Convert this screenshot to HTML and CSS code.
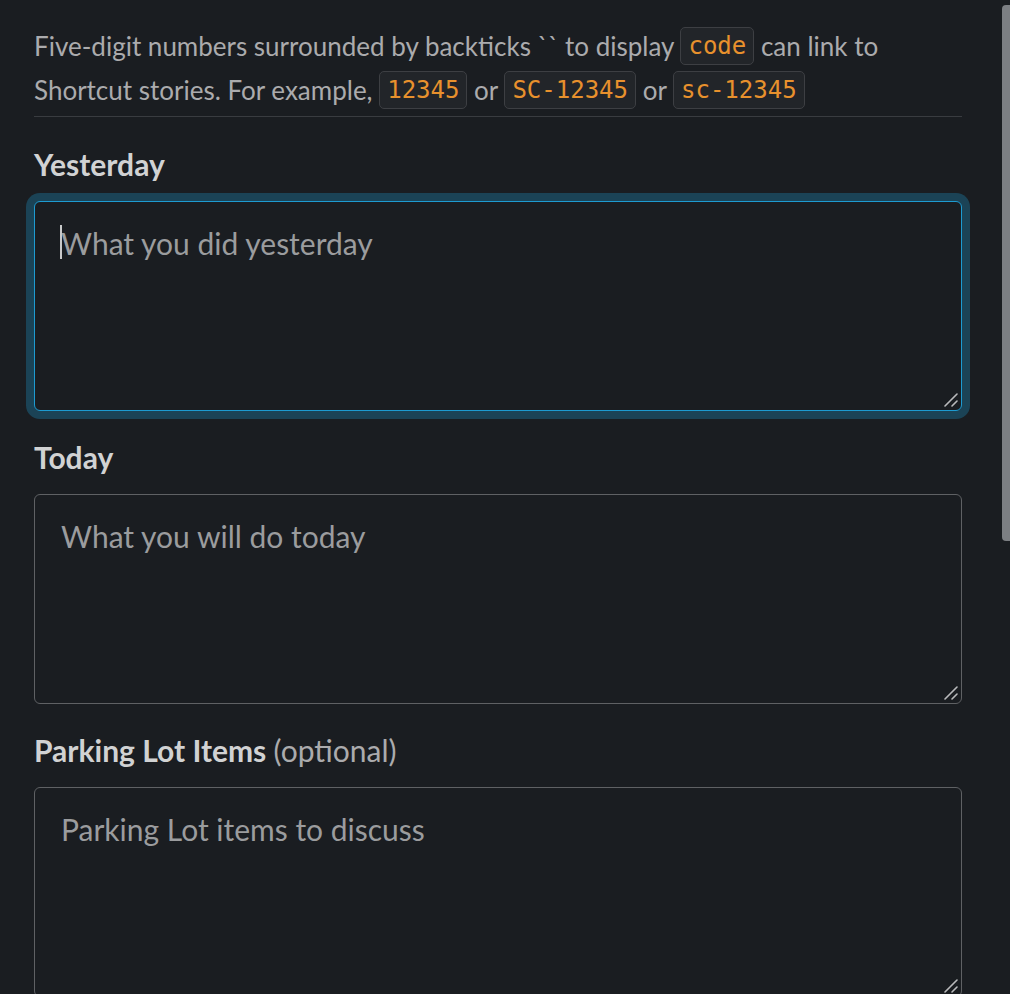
FILE: index.html
```html
<!DOCTYPE html>
<html lang="en">
<head>
<meta charset="utf-8">
<title>Standup</title>
<link rel="stylesheet" href="styles.css">
</head>
<body>
<main class="form">
  <p class="intro">Five-digit numbers surrounded by backticks `` to display <code class="tag">code</code> can link to Shortcut stories. For example, <code class="tag">12345</code> or <code class="tag">SC-12345</code> or <code class="tag">sc-12345</code></p>

  <div class="field">
    <label class="label" for="y">Yesterday</label>
    <div class="box-wrap">
      <textarea id="y" class="box focused" placeholder="What you did yesterday"></textarea>
      <span class="caret"></span>
      <svg class="grip" viewBox="0 0 14 14" width="14" height="14"><path d="M1 13 L13 1 M8 13 L13 8" stroke="#b9babc" stroke-width="1.6" stroke-linecap="round" fill="none"/></svg>
    </div>
  </div>

  <div class="field">
    <label class="label" for="t">Today</label>
    <div class="box-wrap">
      <textarea id="t" class="box" placeholder="What you will do today"></textarea>
      <svg class="grip" viewBox="0 0 14 14" width="14" height="14"><path d="M1 13 L13 1 M8 13 L13 8" stroke="#b9babc" stroke-width="1.6" stroke-linecap="round" fill="none"/></svg>
    </div>
  </div>

  <div class="field">
    <label class="label" for="p">Parking Lot Items <span class="opt">(optional)</span></label>
    <div class="box-wrap">
      <textarea id="p" class="box" placeholder="Parking Lot items to discuss"></textarea>
      <svg class="grip" viewBox="0 0 14 14" width="14" height="14"><path d="M1 13 L13 1 M8 13 L13 8" stroke="#b9babc" stroke-width="1.6" stroke-linecap="round" fill="none"/></svg>
    </div>
  </div>
</main>
<div class="scrollbar"></div>
</body>
</html>
```

FILE: styles.css
```css
html, body {
  margin: 0;
  padding: 0;
  background: #1a1d21;
  color-scheme: dark;
  overflow: hidden;
}

body {
  font-family: Lato, "Noto Sans", sans-serif;
  height: 994px;
}

.form {
  width: 928px;
  padding: 24px 0 0 34px;
}

.intro {
  margin: 0;
  font-size: 26px;
  line-height: 44px;
  color: #ababad;
  padding-bottom: 4px;
  border-bottom: 1px solid #393c40;
}

.tag {
  display: inline-block;
  font-family: "DejaVu Sans Mono", "Liberation Mono", monospace;
  font-size: 24px;
  line-height: 28px;
  padding: 4px 7px;
  border: 1px solid #3d3f43;
  border-radius: 5px;
  background: #222529;
  color: #e8912d;
  vertical-align: 2px;
}

.field {
  display: flex;
  flex-direction: column;
  margin-top: 30px;
}

.field + .field {
  margin-top: 29px;
}

.label {
  font-size: 30px;
  line-height: 34px;
  font-weight: 700;
  color: #d1d2d3;
  margin-bottom: 20px;
}

.opt {
  font-weight: 400;
  color: #ababad;
}

.box-wrap {
  position: relative;
  display: flex;
}

.box {
  flex: 1;
  box-sizing: border-box;
  height: 210px;
  margin: 0;
  padding: 20px 26px;
  background: #1a1d21;
  border: 1px solid #5f6164;
  border-radius: 6px;
  font-family: Lato, "Noto Sans", sans-serif;
  font-size: 30px;
  line-height: 42px;
  color: #d1d2d3;
  resize: none;
  outline: none;
}

.box::placeholder {
  color: #9b9c9e;
  opacity: 1;
}

.box.focused {
  border-color: #1d9bd1;
  box-shadow: 0 0 0 8px rgba(29, 155, 209, 0.3);
}

.caret {
  position: absolute;
  left: 26px;
  top: 24px;
  width: 2px;
  height: 34px;
  background: #c8c9ca;
}

.grip {
  position: absolute;
  right: 4px;
  bottom: 4px;
}

.scrollbar {
  position: absolute;
  top: 5px;
  right: 0;
  width: 8px;
  height: 536px;
  background: #7c7f83;
  border-radius: 4px 0 0 4px;
}
```
